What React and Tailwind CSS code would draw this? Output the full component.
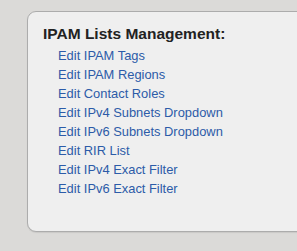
export default function App() {
  const links = [
    "Edit IPAM Tags",
    "Edit IPAM Regions",
    "Edit Contact Roles",
    "Edit IPv4 Subnets Dropdown",
    "Edit IPv6 Subnets Dropdown",
    "Edit RIR List",
    "Edit IPv4 Exact Filter",
    "Edit IPv6 Exact Filter",
  ];
  return (
    <div className="w-[297px] h-[251px] overflow-hidden bg-[#dbdad8] pt-[11px] pl-[27px] font-['Liberation_Sans',Arial,sans-serif]">
      <div className="w-[300px] h-[221px] bg-[#efefef] border border-[#acacac] rounded-l-[9px] shadow-[0_1px_1px_rgba(0,0,0,0.08)] pt-[12px] pl-[15px]">
        <h2 className="text-[15.5px] leading-[20px] font-bold text-[#222]">IPAM Lists Management:</h2>
        <ul className="mt-[2px] pl-[15px]">
          {links.map((l) => (
            <li key={l} className="text-[12.9px] leading-[19px] text-[#2c5ba8]">
              <a href="#">{l}</a>
            </li>
          ))}
        </ul>
      </div>
    </div>
  );
}
